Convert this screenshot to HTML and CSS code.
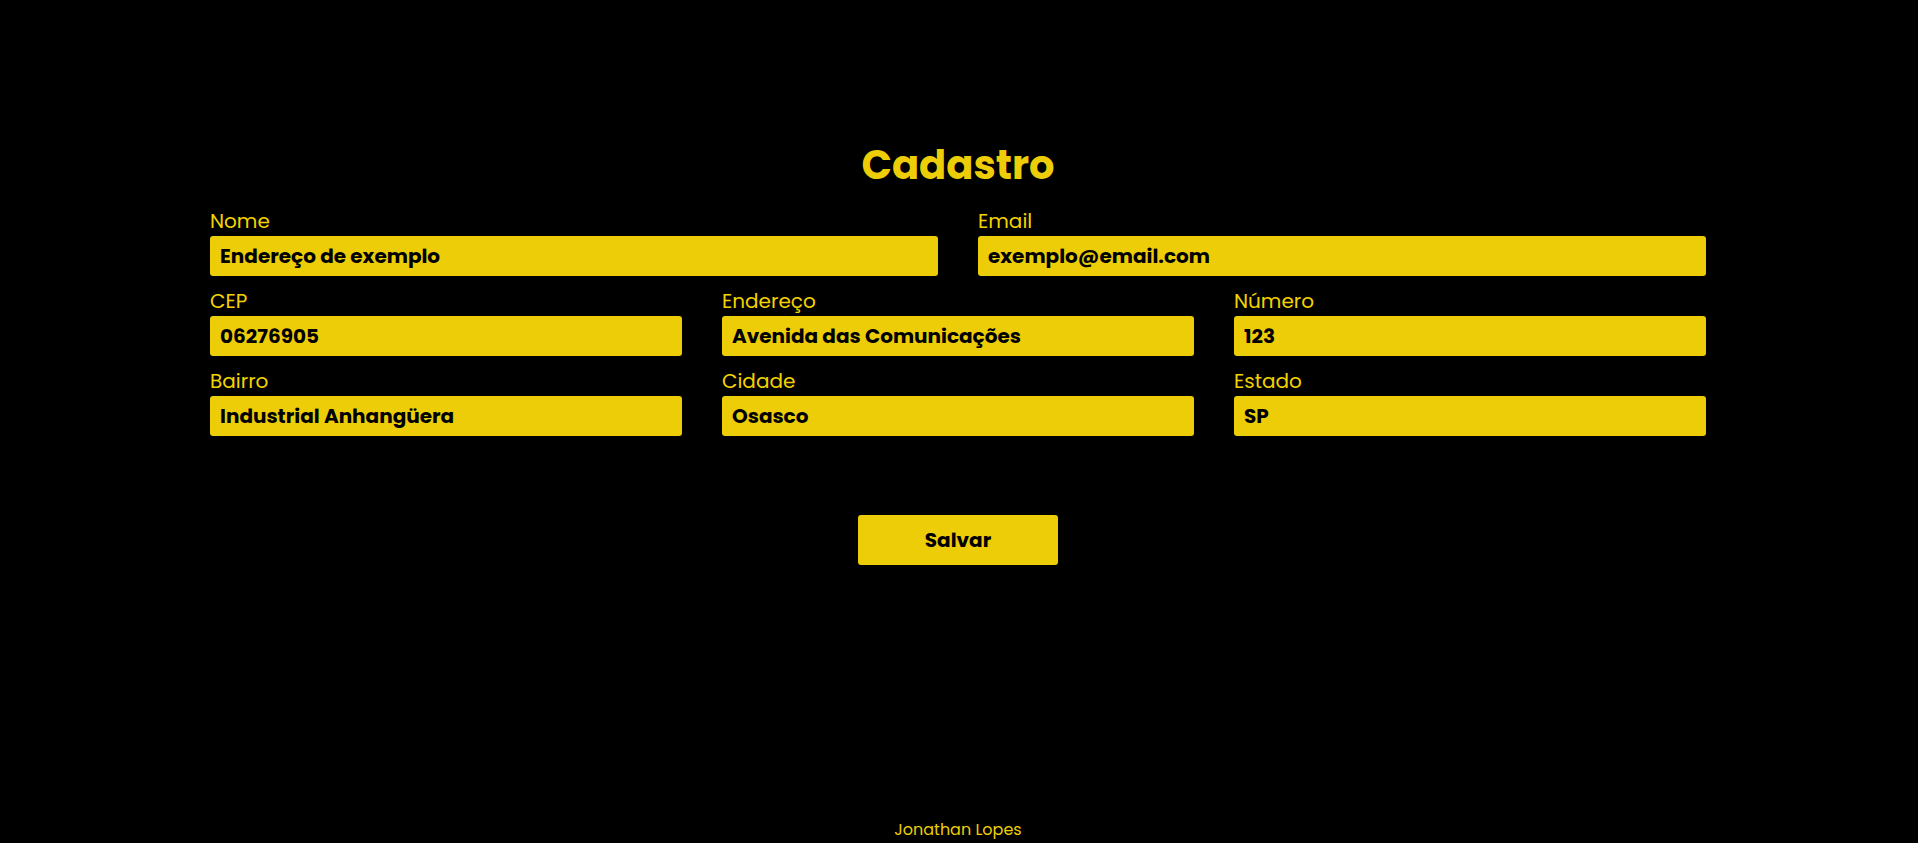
FILE: index.html
```html
<!DOCTYPE html>
<html lang="pt-BR">
<head>
<meta charset="utf-8">
<title>Cadastro</title>
<link rel="stylesheet" href="styles.css">
</head>
<body>
<main class="page">
  <form class="form">
    <h1 class="title">Cadastro</h1>
    <div class="row row-2">
      <div class="field"><label class="label">Nome</label><input class="input" type="text" value="Endereço de exemplo"></div>
      <div class="field"><label class="label">Email</label><input class="input" type="text" value="exemplo@email.com"></div>
    </div>
    <div class="row row-3">
      <div class="field"><label class="label">CEP</label><input class="input" type="text" value="06276905"></div>
      <div class="field"><label class="label">Endereço</label><input class="input" type="text" value="Avenida das Comunicações"></div>
      <div class="field"><label class="label">Número</label><input class="input" type="text" value="123"></div>
    </div>
    <div class="row row-3">
      <div class="field"><label class="label">Bairro</label><input class="input" type="text" value="Industrial Anhangüera"></div>
      <div class="field"><label class="label">Cidade</label><input class="input" type="text" value="Osasco"></div>
      <div class="field"><label class="label">Estado</label><input class="input" type="text" value="SP"></div>
    </div>
    <div class="actions"><button class="button" type="button">Salvar</button></div>
  </form>
  <footer class="footer">Jonathan Lopes</footer>
</main>
</body>
</html>
```
FILE: styles.css
```css
* { box-sizing: border-box; }
html, body { margin: 0; padding: 0; }
body {
  background: #000;
  color: #eccd07;
  font-family: "Poppins", "Inter", "Open Sans", sans-serif;
}
.page {
  min-height: 100vh;
  display: flex;
  flex-direction: column;
  align-items: center;
  padding-right: 2px;
}
.form {
  width: 1496px;
  padding-top: 141px;
  display: flex;
  flex-direction: column;
}
.title {
  margin: 0 0 17px;
  text-align: center;
  font-size: 40px;
  line-height: 48px;
  font-weight: 700;
  color: #eccd07;
}
.row {
  display: grid;
  column-gap: 40px;
  margin-bottom: 10px;
}
.row-2 { grid-template-columns: 1fr 1fr; }
.row-3 { grid-template-columns: 1fr 1fr 1fr; }
.field { display: flex; flex-direction: column; }
.label {
  font-size: 20px;
  line-height: 30px;
  color: #f2d300;
}
.input {
  height: 40px;
  border: none;
  border-radius: 3px;
  background: #eccd07;
  padding: 0 10px;
  font-family: inherit;
  font-size: 20px;
  font-weight: 700;
  color: #000;
  outline: none;
}
.actions {
  display: flex;
  justify-content: center;
  margin-top: 69px;
}
.button {
  width: 200px;
  height: 50px;
  border: none;
  border-radius: 3px;
  background: #eccd07;
  color: #000;
  font-family: inherit;
  font-size: 20px;
  font-weight: 700;
}
.footer {
  margin-top: auto;
  padding-bottom: 1px;
  font-size: 16px;
  line-height: 24px;
  color: #eccd07;
}
```
